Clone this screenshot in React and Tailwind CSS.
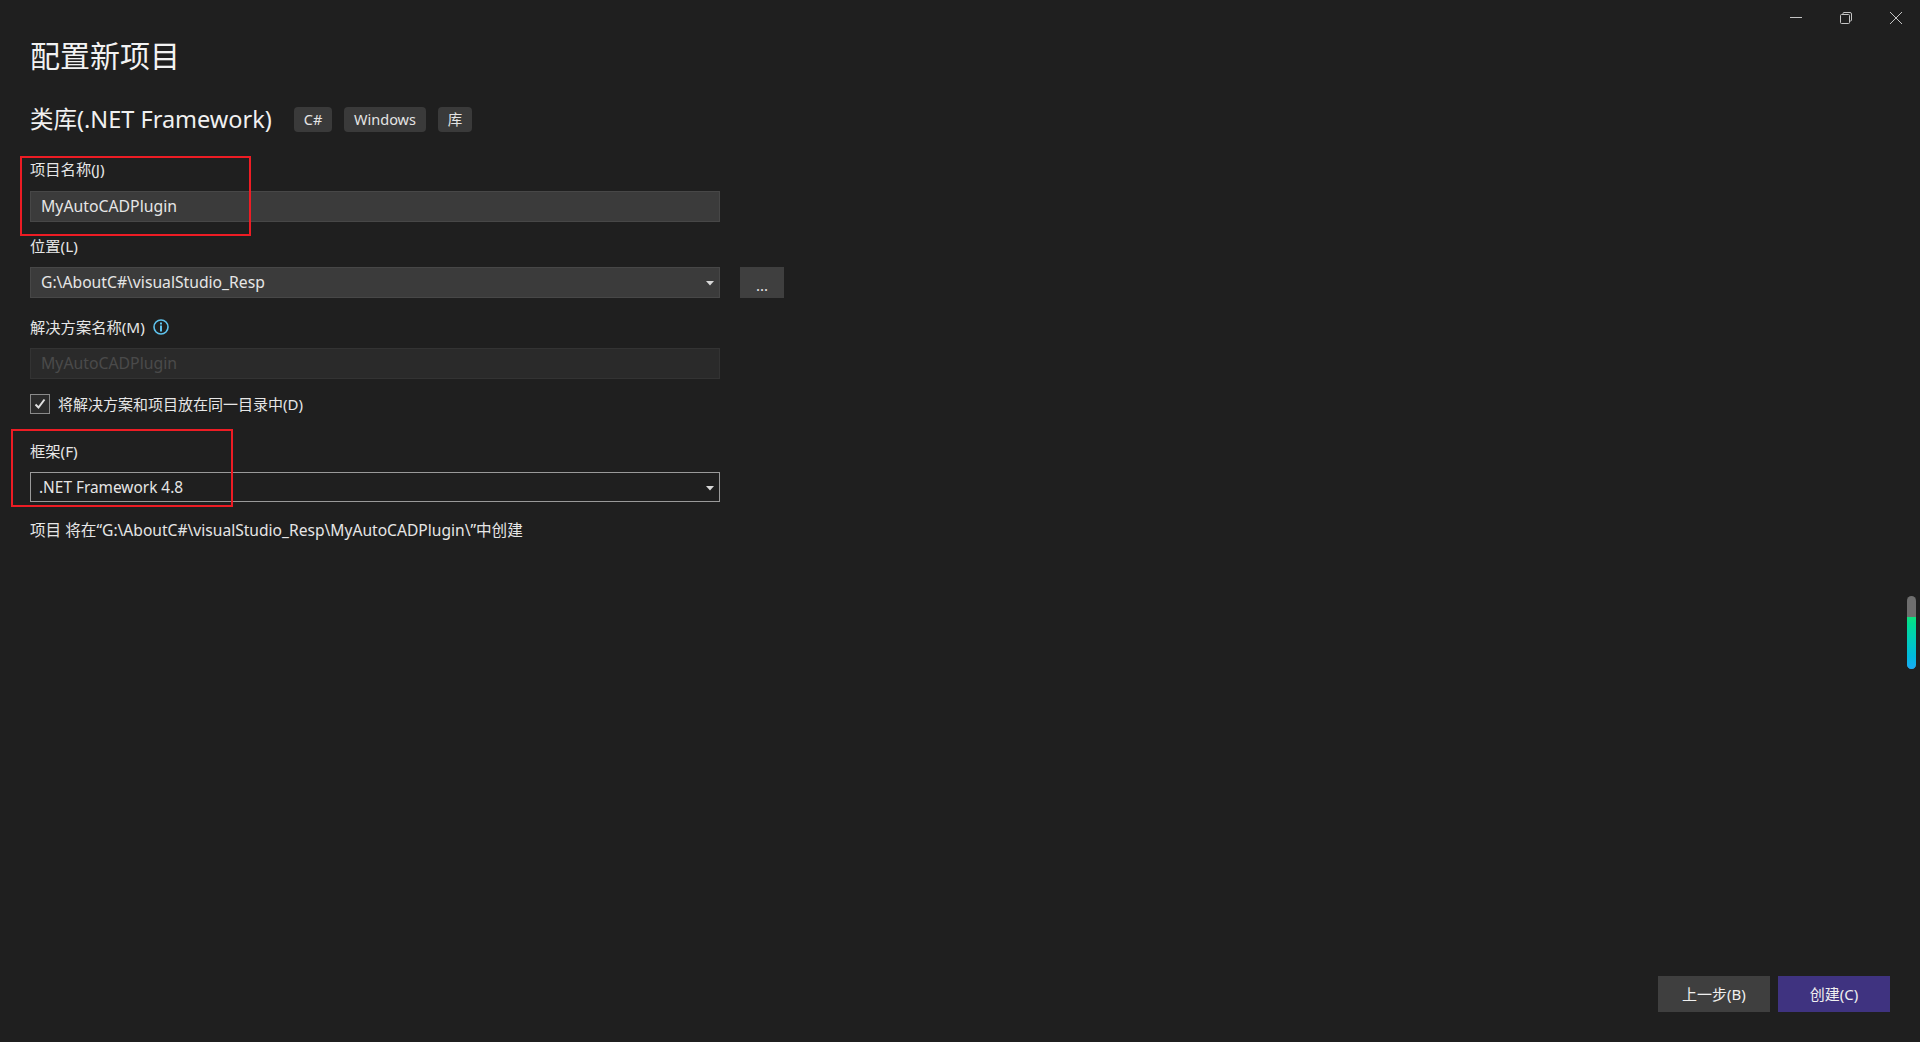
import React from 'react';

const font = { fontFamily: '"Noto Sans", "Noto Sans CJK SC", sans-serif' };

const Tag = ({ children, className }) => (
    <span className={`flex h-[25px] items-center justify-center rounded-[4px] bg-[#3a3a3a] text-[14.5px] text-[#e4e4e4] ${className}`}>
        {children}
    </span>
);

const Caret = () => (
    <svg width="8" height="5" viewBox="0 0 8 5" className="absolute right-[5px] top-[13px]">
        <path d="M0 0H8L4 4.5Z" fill="#d8d8d8" />
    </svg>
);

const App = () => {
    return (
        <div
            className="relative flex h-screen w-full flex-col overflow-hidden bg-[#1f1f1f] text-[#e6e6e6]"
            style={font}
        >
            {/* Window buttons */}
            <div className="flex h-[41px] justify-end gap-[38px] pr-[18px] pt-[12px]">
                <svg width="12" height="12" viewBox="0 0 12 12" className="text-[#c4c4c4]">
                    <path d="M0 5.5H12" stroke="currentColor" strokeWidth="1" />
                </svg>
                <svg width="12" height="12" viewBox="0 0 12 12" className="text-[#c4c4c4]">
                    <path d="M3 2.5V1.5Q3 .5 4 .5H10Q11.500 .5 11.500 2V8Q11.500 9 10.500 9H9.500" fill="none" stroke="currentColor" />
                    <rect x="0.500" y="2.500" width="9" height="9" rx="1" fill="none" stroke="currentColor" />
                </svg>
                <svg width="12" height="12" viewBox="0 0 12 12" className="text-[#c4c4c4]">
                    <path d="M0 0L12 12M12 0L0 12" stroke="currentColor" strokeWidth="1" />
                </svg>
            </div>

            {/* Form */}
            <div className="flex flex-col pl-[30px]">
                <h1 className="h-[43px] text-[30px] leading-[30px] text-[#f2f2f2]">配置新项目</h1>

                <div className="mt-[23px] flex h-[25px] items-center">
                    <h2 className="w-[264px] text-[23.5px] leading-[25px] text-[#f0f0f0]">类库(.NET Framework)</h2>
                    <Tag className="w-[38px]">C#</Tag>
                    <Tag className="ml-[12px] w-[82px]">Windows</Tag>
                    <Tag className="ml-[12px] w-[34px]">库</Tag>
                </div>

                <label className="mt-[27px] h-[20px] text-[15.3px] leading-[20px]">项目名称(J)</label>
                <div className="mt-[12px] flex h-[31px] w-[690px] items-center border border-[#474747] bg-[#3b3b3b] pl-[10px] text-[15.8px]">
                    MyAutoCADPlugin
                </div>

                <label className="mt-[14px] h-[20px] text-[15.3px] leading-[20px]">位置(L)</label>
                <div className="mt-[11px] flex items-start gap-[20px]">
                    <div className="relative flex h-[31px] w-[690px] items-center border border-[#474747] bg-[#3b3b3b] pl-[10px] text-[15.7px]">
                        G:\AboutC#\visualStudio_Resp
                        <Caret />
                    </div>
                    <div className="flex h-[31px] w-[44px] items-center justify-center bg-[#3f3f3f] pt-[6px] text-[15px] leading-none">...</div>
                </div>

                <div className="mt-[19px] flex h-[20px] items-center gap-[8px]">
                    <label className="text-[15.3px] leading-[20px]">解决方案名称(M)</label>
                    <svg width="16" height="16" viewBox="0 0 16 16" className="text-[#5fc3ee]">
                        <circle cx="8" cy="8" r="7" fill="none" stroke="currentColor" strokeWidth="1.600" />
                        <rect x="7" y="3.500" width="2" height="2" fill="currentColor" />
                        <rect x="7" y="6.500" width="2" height="6" fill="currentColor" />
                    </svg>
                </div>
                <div className="mt-[11px] flex h-[31px] w-[690px] items-center border border-[#333333] bg-[#2a2a2a] pl-[10px] text-[15.8px] text-[#4a4a4a]">
                    MyAutoCADPlugin
                </div>

                <div className="mt-[15px] flex h-[20px] items-center gap-[8px]">
                    <div className="flex h-[20px] w-[20px] items-center justify-center border border-[#8a8a8a] bg-[#2b2b2b]">
                        <svg width="12" height="12" viewBox="0 0 12 12">
                            <path d="M1.500 6.500L4.500 9.500L10.500 1.500" fill="none" stroke="#e0e0e0" strokeWidth="2" />
                        </svg>
                    </div>
                    <span className="text-[15px] leading-[20px]">将解决方案和项目放在同一目录中(D)</span>
                </div>

                <label className="mt-[27px] h-[20px] text-[15.3px] leading-[20px]">框架(F)</label>
                <div className="relative mt-[11px] flex h-[30px] w-[690px] items-center border border-[#9a9a9a] pl-[8px] pt-[1px] text-[15.4px]">
                    .NET Framework 4.8
                    <Caret />
                </div>

                <p className="mt-[18px] h-[20px] text-[15.6px] leading-[20px]">项目 将在“G:\AboutC#\visualStudio_Resp\MyAutoCADPlugin\”中创建</p>
            </div>

            {/* Footer buttons */}
            <div className="mt-auto flex justify-end gap-[8px] pb-[30px] pr-[30px]">
                <button className="h-[36px] w-[112px] bg-[#3f3f3f] text-[15px] text-[#f0f0f0]">上一步(B)</button>
                <button className="h-[36px] w-[112px] bg-[#3f3380] text-[15px] text-[#f0f0f0]">创建(C)</button>
            </div>

            {/* Annotation boxes */}
            <div className="absolute left-[20px] top-[156px] h-[80px] w-[231px] border-2 border-[#ed1c24]" />
            <div className="absolute left-[11px] top-[429px] h-[78px] w-[222px] border-2 border-[#ed1c24]" />

            {/* Floating scroll indicator */}
            <div className="absolute left-[1907px] top-[596px] h-[73px] w-[9px] overflow-hidden rounded-full bg-[#6e6e6e]">
                <div className="mt-[21px] h-[52px] bg-gradient-to-b from-[#0ee27e] to-[#19a9f5]" />
            </div>
        </div>
    );
};

export default App;
